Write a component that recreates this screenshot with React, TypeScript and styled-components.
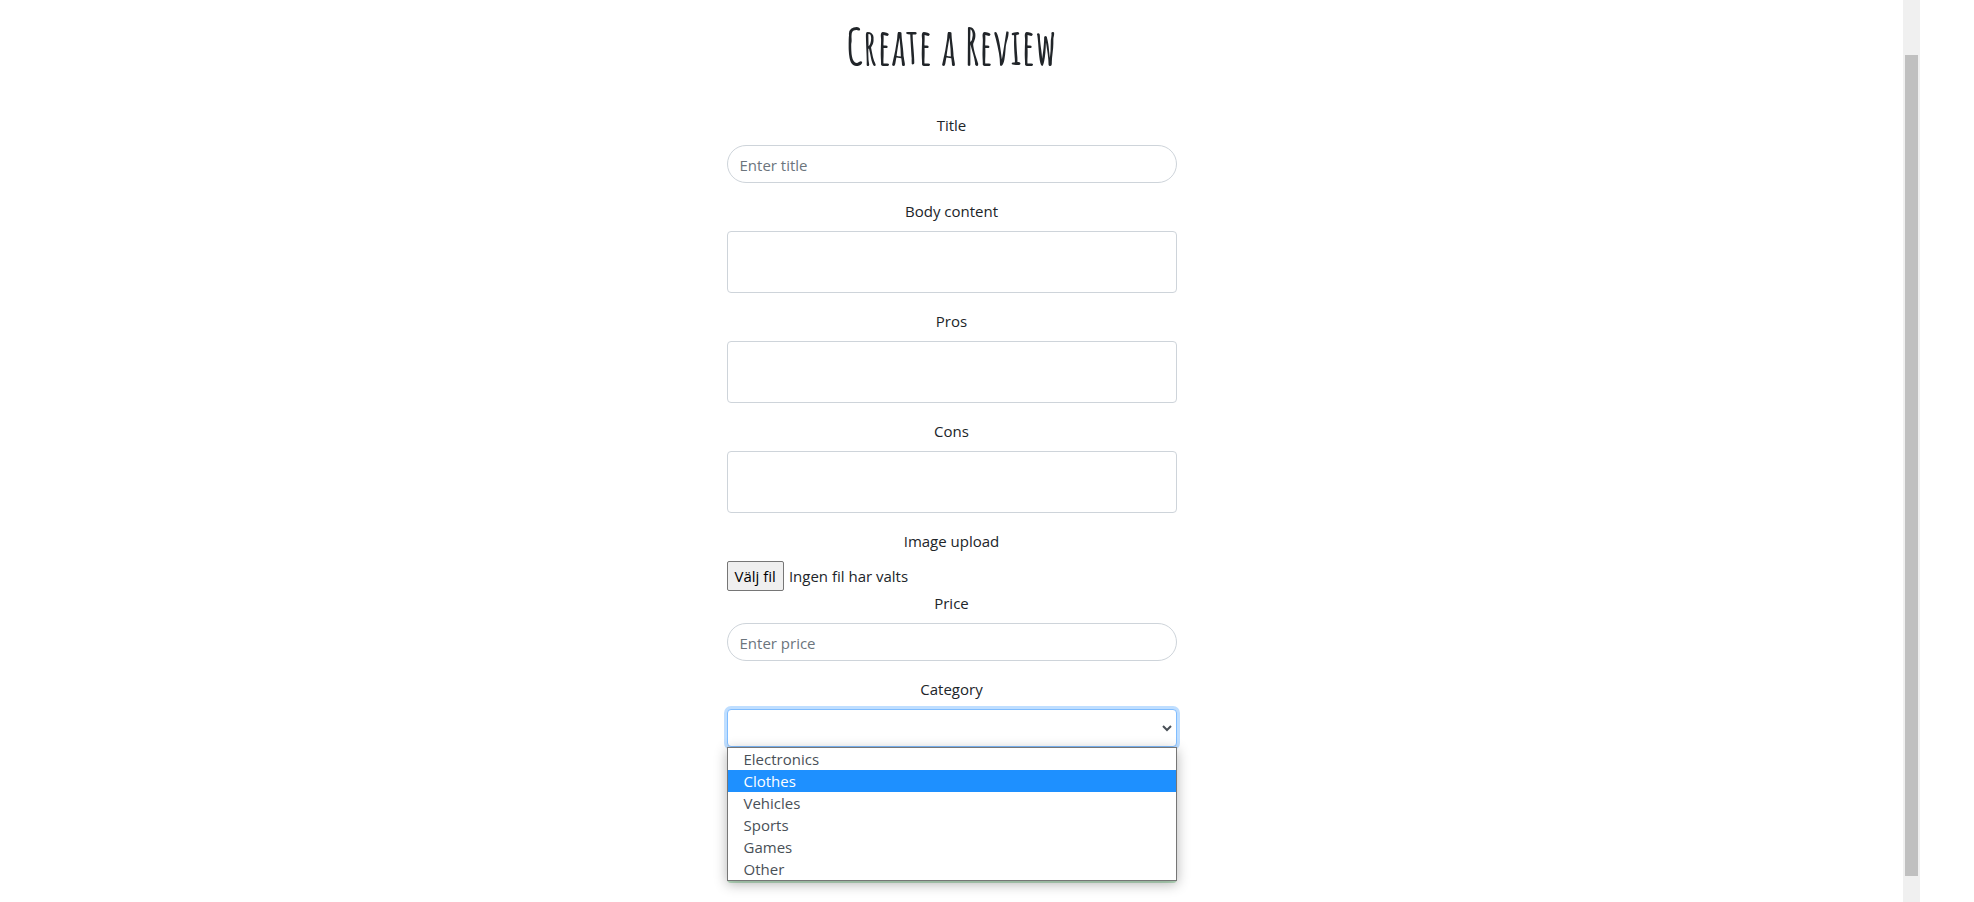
import React, { useRef, useState } from "react";
import styled, { createGlobalStyle } from "styled-components";

const GlobalStyle = createGlobalStyle`
  *, *::before, *::after { box-sizing: border-box; }
  body {
    margin: 0;
    background: #fff;
    color: #212529;
    font-family: "Open Sans", "Noto Sans", sans-serif;
    font-size: 15px;
    line-height: 24px;
  }
`;

const Page = styled.div`
  display: flex;
  min-height: 100vh;
  padding-right: 54px;
`;

const Content = styled.main`
  flex: 1;
  display: flex;
  flex-direction: column;
  align-items: center;
  padding: 20px 16px 0;
`;

const ScrollTrack = styled.div`
  display: flex;
  width: 17px;
  padding: 55px 2px 26px;
  background: #f0f0f0;
`;

const ScrollThumb = styled.div`
  flex: 1;
  background: #c0c0c0;
`;

const Heading = styled.h1`
  margin: 0 0 41px;
  font-family: "Amatic SC", Roboto, sans-serif;
  font-size: 49px;
  font-weight: 700;
  line-height: 52px;
`;

const Form = styled.form`
  width: 100%;
  max-width: 450px;
`;

const Field = styled.div<{ $tight?: boolean }>`
  position: relative;
  display: flex;
  flex-direction: column;
  margin-bottom: ${(p) => (p.$tight ? 0 : 16)}px;
`;

const Label = styled.label`
  margin-bottom: 8px;
  text-align: center;
`;

const TextInput = styled.input`
  height: 38px;
  padding: 8px 12px 6px;
  border: 1px solid #ced4da;
  border-radius: 20px;
  background: #fff;
  color: #495057;
  font: inherit;
  &::placeholder { color: #6c757d; opacity: 1; }
`;

const TextArea = styled.textarea`
  height: 62px;
  padding: 6px 12px;
  border: 1px solid #ced4da;
  border-radius: 4px;
  background: #fff;
  color: #495057;
  font: inherit;
  resize: none;
`;

const FileRow = styled.div`
  display: flex;
  align-items: center;
  gap: 5px;
`;

const FileButton = styled.button`
  height: 30px;
  padding: 0 7px;
  border: 1px solid #767676;
  border-radius: 2px;
  background: #efefef;
  color: #000;
  font: inherit;
`;

const Select = styled.select`
  appearance: none;
  width: 100%;
  height: 38px;
  padding: 6px 12px;
  border: 1px solid #80bdff;
  border-radius: 4px;
  outline: 0;
  background: #fff;
  box-shadow: 0 0 0 3px #bfdeff;
  color: #495057;
  font: inherit;
`;

const SelectBox = styled.div`
  position: relative;
`;

const Chevron = styled.svg`
  position: absolute;
  right: 5px;
  top: 15px;
  pointer-events: none;
`;

const Menu = styled.ul`
  position: absolute;
  top: 100%;
  left: 0;
  right: 0;
  z-index: 1;
  margin: 0;
  padding: 0;
  border: 1px solid #767676;
  background: #fff;
  box-shadow: 0 3px 12px rgba(0, 0, 0, 0.3);
  list-style: none;
`;

const MenuItem = styled.li<{ $active: boolean }>`
  padding: 0 16px;
  line-height: 22px;
  background: ${(p) => (p.$active ? "#1e90ff" : "#fff")};
  color: ${(p) => (p.$active ? "#fff" : "#495057")};
`;

const SubmitButton = styled.button`
  display: block;
  width: 100%;
  height: 38px;
  margin-top: 98px;
  border: 0;
  border-radius: 4px;
  background: #bfe5c7;
`;

const categories = ["Electronics", "Clothes", "Vehicles", "Sports", "Games", "Other"];

export default function App() {
  const fileRef = useRef<HTMLInputElement>(null);
  const [fileName, setFileName] = useState("Ingen fil har valts");
  const [category, setCategory] = useState("");
  const [active, setActive] = useState("Clothes");

  return (
    <>
      <GlobalStyle />
      <Page>
        <Content>
          <Heading>Create a Review</Heading>
          <Form onSubmit={(e) => e.preventDefault()}>
            <Field>
              <Label htmlFor="title">Title</Label>
              <TextInput id="title" type="text" placeholder="Enter title" />
            </Field>
            <Field>
              <Label htmlFor="body">Body content</Label>
              <TextArea id="body" />
            </Field>
            <Field>
              <Label htmlFor="pros">Pros</Label>
              <TextArea id="pros" />
            </Field>
            <Field>
              <Label htmlFor="cons">Cons</Label>
              <TextArea id="cons" />
            </Field>
            <Field $tight>
              <Label htmlFor="image">Image upload</Label>
              <FileRow>
                <FileButton type="button" onClick={() => fileRef.current?.click()}>
                  Välj fil
                </FileButton>
                <span>{fileName}</span>
                <input
                  id="image"
                  ref={fileRef}
                  type="file"
                  hidden
                  onChange={(e) => setFileName(e.target.files?.[0]?.name ?? "Ingen fil har valts")}
                />
              </FileRow>
            </Field>
            <Field>
              <Label htmlFor="price">Price</Label>
              <TextInput id="price" type="text" placeholder="Enter price" />
            </Field>
            <Field>
              <Label htmlFor="category">Category</Label>
              <SelectBox>
                <Select id="category" value={category} onChange={(e) => setCategory(e.target.value)}>
                  <option value="" />
                  {categories.map((c) => (
                    <option key={c}>{c}</option>
                  ))}
                </Select>
                <Chevron width="10" height="8" viewBox="0 0 10 8" aria-hidden="true">
                  <path d="M1 2l4 4 4-4" fill="none" stroke="#495057" strokeWidth="2" />
                </Chevron>
                <Menu role="listbox" aria-label="Category">
                  {categories.map((c) => (
                    <MenuItem
                      key={c}
                      role="option"
                      aria-selected={c === active}
                      $active={c === active}
                      onMouseEnter={() => setActive(c)}
                      onClick={() => setCategory(c)}
                    >
                      {c}
                    </MenuItem>
                  ))}
                </Menu>
              </SelectBox>
            </Field>
            <SubmitButton type="submit" aria-label="Submit review" />
          </Form>
        </Content>
        <ScrollTrack aria-hidden="true">
          <ScrollThumb />
        </ScrollTrack>
      </Page>
    </>
  );
}
